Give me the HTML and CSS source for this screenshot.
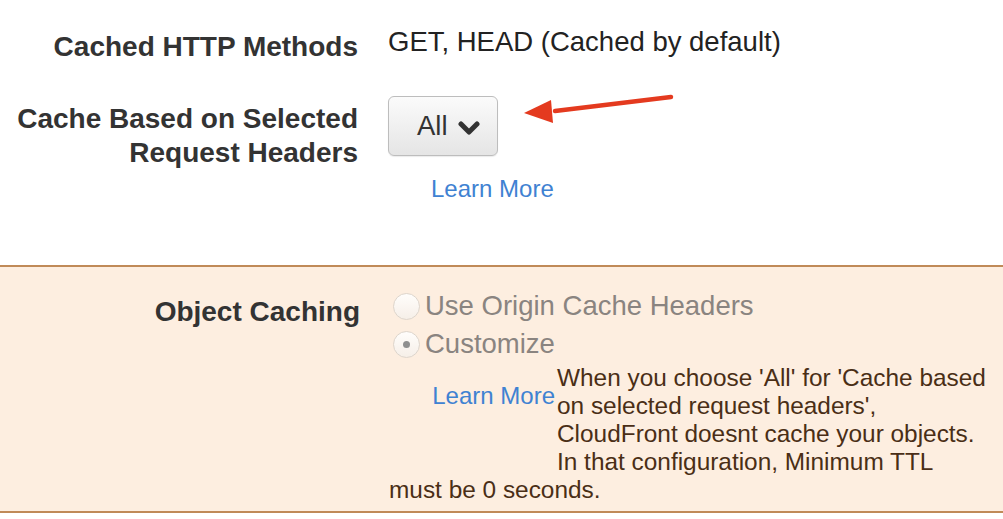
FILE: index.html
```html
<!DOCTYPE html>
<html>
<head>
<meta charset="utf-8">
<link rel="stylesheet" href="styles.css">
</head>
<body>
<div class="page">
  <section class="plain">
    <div class="row row-methods">
      <div class="label">Cached HTTP Methods</div>
      <div class="value">GET, HEAD (Cached by default)</div>
    </div>
    <div class="row row-headers">
      <div class="label">Cache Based on Selected<br>Request Headers</div>
      <div class="value">
        <button class="select">All
          <svg class="chev" width="22" height="14" viewBox="0 0 22 14"><polyline points="3,3 11,11 19,3" fill="none" stroke="#333" stroke-width="5" stroke-linecap="round" stroke-linejoin="round"/></svg>
        </button>
        <a class="link link-top" href="#">Learn More</a>
      </div>
    </div>
    <svg class="arrow" width="160" height="40" viewBox="0 0 160 40">
      <line x1="156" y1="5" x2="40" y2="19" stroke="#e43a1f" stroke-width="4.5" stroke-linecap="round"/>
      <polygon points="9,21 36,8 38,31" fill="#e43a1f"/>
    </svg>
  </section>
  <section class="warn">
    <div class="row row-caching">
      <div class="label">Object Caching</div>
      <div class="value">
        <div class="options">
          <div class="opt"><span class="radio"></span>Use Origin Cache Headers</div>
          <div class="opt"><span class="radio checked"></span>Customize</div>
        </div>
        <div class="message">
          <div class="msg-aside"><a class="link" href="#">Learn More</a></div>
          <span class="msg-text">When you choose 'All' for 'Cache based on selected request headers', CloudFront doesnt cache your objects. In that configuration, Minimum TTL must be 0 seconds.</span>
        </div>
      </div>
    </div>
  </section>
</div>
</body>
</html>
```
FILE: styles.css
```css
html, body {
  margin: 0;
  padding: 0;
  background: #ffffff;
}
body {
  font-family: "Liberation Sans", Arial, Helvetica, sans-serif;
  color: #333333;
  width: 1003px;
  height: 519px;
  overflow: hidden;
}
.page {
  position: relative;
}
.plain {
  height: 265px;
  box-sizing: border-box;
  padding-top: 25px;
}
.row {
  display: grid;
  grid-template-columns: 358px 1fr;
  column-gap: 30px;
  align-items: start;
}
.label {
  font-weight: bold;
  font-size: 28px;
  line-height: 34px;
  text-align: right;
  color: #333333;
}
.value {
  font-size: 27.5px;
  line-height: 34px;
  color: #222222;
}
.row-methods .label {
  padding-top: 5px;
}
.row-headers {
  margin-top: 32px;
}
.row-headers .label {
  padding-top: 6px;
}
.row-headers .value {
  display: flex;
  flex-direction: column;
  align-items: flex-start;
}
.select {
  display: flex;
  align-items: center;
  gap: 10px;
  width: 110px;
  height: 60px;
  box-sizing: border-box;
  padding: 0 0 0 28px;
  border: 1px solid #bdbdbd;
  border-radius: 6px;
  background: linear-gradient(#fbfbfb, #e5e5e5);
  font-family: "Liberation Sans", Arial, sans-serif;
  font-size: 27.5px;
  color: #333333;
  box-shadow: 0 1px 1px rgba(0,0,0,0.08);
}
.chev {
  margin-top: 3px;
}
.link {
  font-size: 24px;
  line-height: 28px;
  color: #3f82d2;
  text-decoration: none;
}
.link-top {
  margin-top: 19px;
  margin-left: 43px;
}
.arrow {
  position: absolute;
  left: 515px;
  top: 92px;
}
.warn {
  background: #fdeee0;
  border-top: 2px solid #c08a58;
  border-bottom: 2px solid #c08a58;
  height: 248px;
  box-sizing: border-box;
  padding-top: 20px;
}
.row-caching {
  grid-template-columns: 360px 1fr;
  column-gap: 29px;
}
.row-caching .label {
  line-height: 38px;
  padding-top: 6px;
}
.options {
  font-size: 27.5px;
  line-height: 38px;
  color: #8a8480;
}
.opt {
  display: flex;
  align-items: center;
}
.radio {
  width: 25px;
  height: 25px;
  margin: 0 5px 0 4px;
  border: 1px solid #ddd5cc;
  border-radius: 50%;
  background: linear-gradient(#fffdfb, #f6efe8);
  display: flex;
  align-items: center;
  justify-content: center;
}
.radio.checked::after {
  content: "";
  width: 7px;
  height: 7px;
  border-radius: 50%;
  background: #8f8f8f;
}
.message {
  width: 600px;
  font-size: 24.4px;
  line-height: 28px;
  color: #4a2e16;
  margin-top: 1px;
}
.msg-aside {
  float: left;
  width: 168px;
  height: 100px;
  padding-top: 18px;
  box-sizing: border-box;
  text-align: right;
  padding-right: 2px;
}
```
